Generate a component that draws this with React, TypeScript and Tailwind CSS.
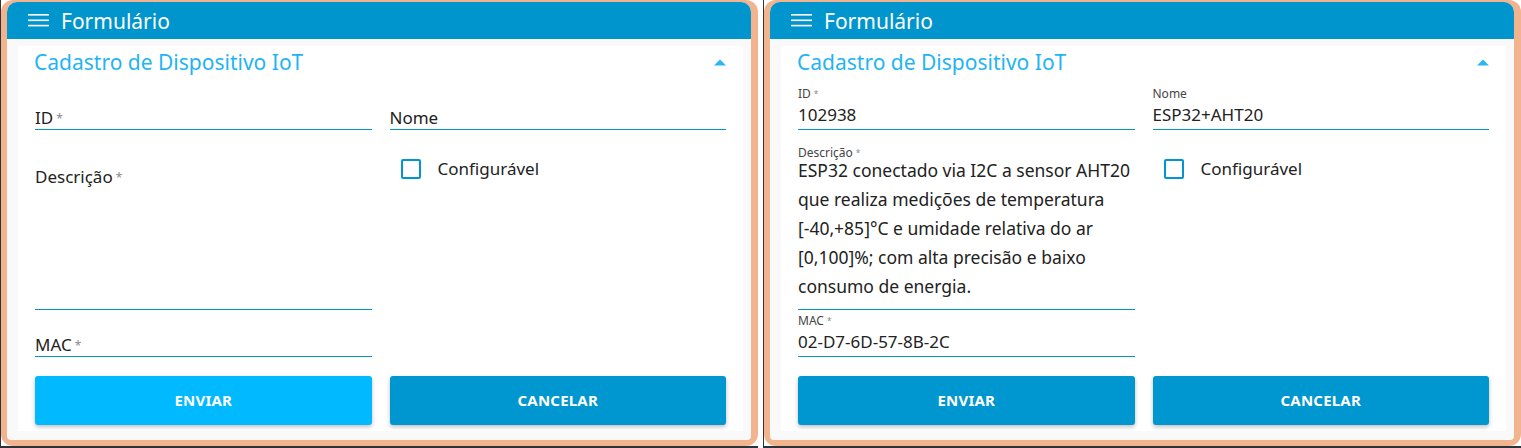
import React from 'react';

const FONT = { fontFamily: '"Noto Sans", "Open Sans", sans-serif' };

type PanelProps = { filled: boolean };

function Hamburger() {
  return (
    <svg width="21" height="13" viewBox="0 0 21 13" className="block">
      <rect x="0" y="0" width="21" height="1.6" fill="#ffffff" />
      <rect x="0" y="5.5" width="21" height="1.6" fill="#ffffff" />
      <rect x="0" y="10.8" width="21" height="1.6" fill="#ffffff" />
    </svg>
  );
}

function Req() {
  return <span className="text-[#8a8a8a] text-[0.7em] align-top ml-[3px]">*</span>;
}

function SmallLabel({ text, required }: { text: string; required?: boolean }) {
  return (
    <span className="block text-[12px] leading-[12px] text-[#444]">
      {text}
      {required && <Req />}
    </span>
  );
}

function BigLabel({ text, required }: { text: string; required?: boolean }) {
  return (
    <span className="block text-[17px] leading-[22px] text-[#222]">
      {text}
      {required && <Req />}
    </span>
  );
}

function LineField({ label, value, required, height }: { label: string; value?: string; required?: boolean; height: string }) {
  return (
    <div className={`${height} flex flex-col justify-end border-b border-[#0096c8]`}>
      {value ? (
        <div className="pb-[2px]">
          <SmallLabel text={label} required={required} />
          <span className="block mt-[3px] text-[17px] leading-[24px] text-[#222]">{value}</span>
        </div>
      ) : (
        <BigLabel text={label} required={required} />
      )}
    </div>
  );
}

const DESC_LINES = [
  'ESP32 conectado via I2C a sensor AHT20',
  'que realiza medições de temperatura',
  '[-40,+85]°C e umidade relativa do ar',
  '[0,100]%; com alta precisão e baixo',
  'consumo de energia.',
];

function Panel({ filled }: PanelProps) {
  return (
    <div className="w-[758px] h-[448px] flex flex-col border-l border-[#2f3337] bg-white">
      <div className="h-[446px] rounded-[12px] bg-[#f2b48e] pt-[2px] pl-[6px] pr-[7px] pb-[6px]">
        <div className="h-full rounded-t-[10px] rounded-b-[4px] overflow-hidden bg-[#f9f9f9] flex flex-col">
          <div className="h-[37px] bg-[#0095cd] flex items-center pl-[21px] gap-[12px] text-white">
            <Hamburger />
            <span className="text-[21px] leading-[28px]">Formulário</span>
          </div>
          <div className="mt-[7px] ml-[11px] mr-[8px] h-[385px] bg-white px-[17px] flex flex-col">
            <div className="flex items-center justify-between h-[28px] mt-[2px] mb-[10px]">
              <span className="text-[21px] leading-[28px] text-[#1fb4f4] -ml-[1px]">Cadastro de Dispositivo IoT</span>
              <svg width="12" height="7" viewBox="0 0 12 7" className="block">
                <path d="M0 6.5 L6 0.5 L12 6.5 Z" fill="#29b6f6" />
              </svg>
            </div>
            <div className="grid grid-cols-2 gap-x-[18px]">
              <div className="flex flex-col">
                <LineField label="ID" required value={filled ? '102938' : undefined} height="h-[44px]" />
                <div className="h-[180px] border-b border-[#0096c8]">
                  {filled ? (
                    <div className="pt-[17px]">
                      <SmallLabel text="Descrição" required />
                      <div className="-mt-[3px] text-[17.5px] leading-[29px] text-[#222]">
                        {DESC_LINES.map((l) => (
                          <div key={l}>{l}</div>
                        ))}
                      </div>
                    </div>
                  ) : (
                    <div className="pt-[36px]">
                      <BigLabel text="Descrição" required />
                    </div>
                  )}
                </div>
                <LineField label="MAC" required value={filled ? '02-D7-6D-57-8B-2C' : undefined} height="h-[47px]" />
              </div>
              <div className="flex flex-col">
                <LineField label="Nome" value={filled ? 'ESP32+AHT20' : undefined} height="h-[44px]" />
                <div className="mt-[28px] ml-[11px] flex items-center gap-[17px]">
                  <span className="block w-[20px] h-[20px] rounded-[2px] border-2 border-[#0096d6] bg-white" />
                  <span className="text-[17px] leading-[22px] text-[#222]">Configurável</span>
                </div>
              </div>
            </div>
            <div className="grid grid-cols-2 gap-x-[18px] mt-[19px]">
              <button
                className={`h-[49px] rounded-[3px] shadow-[0_2px_4px_rgba(0,0,0,0.25)] text-white font-bold text-[15px] tracking-[0.2px] ${
                  filled ? 'bg-[#0096cf]' : 'bg-[#00b9ff]'
                }`}
              >
                ENVIAR
              </button>
              <button className="h-[49px] rounded-[3px] shadow-[0_2px_4px_rgba(0,0,0,0.25)] bg-[#0096cf] text-white font-bold text-[15px] tracking-[0.2px]">
                CANCELAR
              </button>
            </div>
          </div>
        </div>
      </div>
      <div className="h-[2px] bg-[#2f3337]" />
    </div>
  );
}

export default function App() {
  return (
    <div className="w-[1521px] h-[448px] flex gap-[5px] bg-white overflow-hidden" style={FONT}>
      <Panel filled={false} />
      <Panel filled />
    </div>
  );
}
